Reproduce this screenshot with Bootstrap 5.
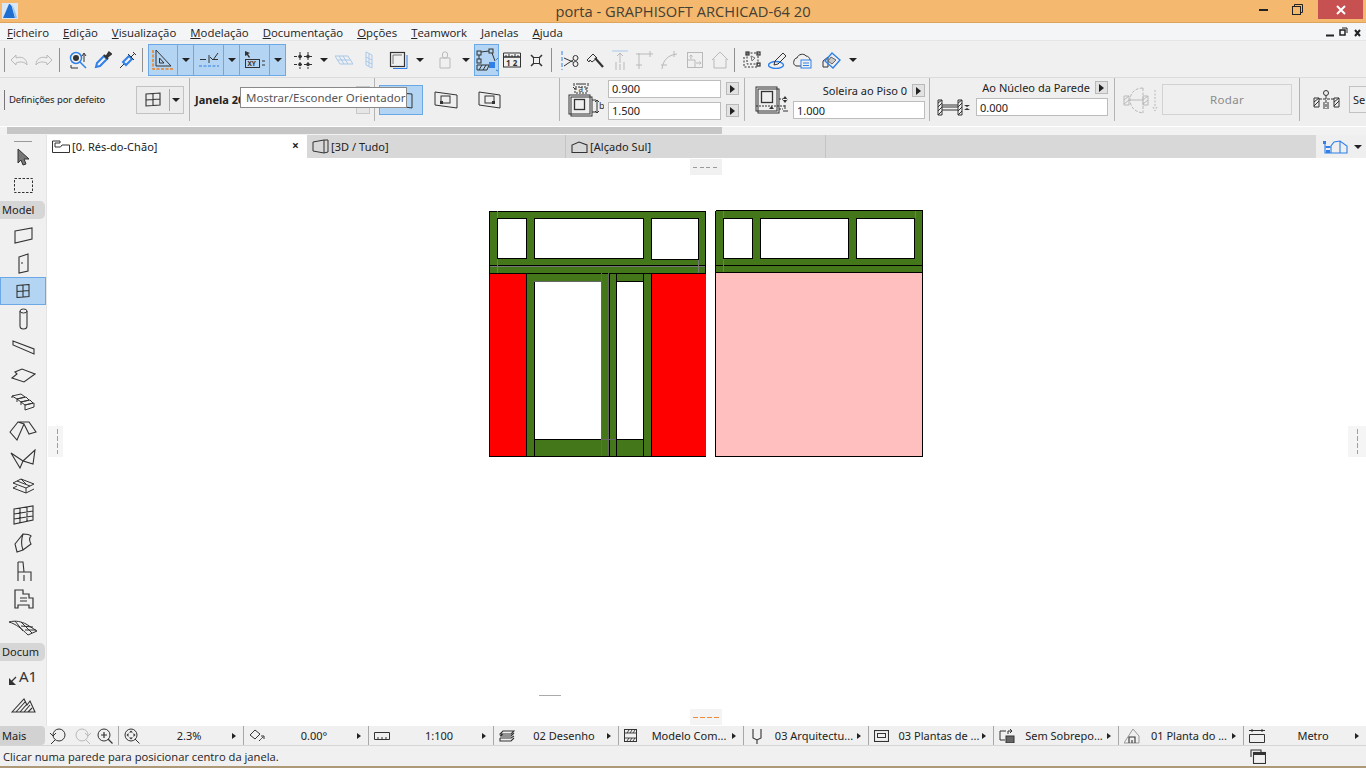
<!DOCTYPE html>
<html lang="pt">
<head>
<meta charset="UTF-8">
<title>porta - GRAPHISOFT ARCHICAD-64 20</title>
<link href="https://cdn.jsdelivr.net/npm/bootstrap@5.3.0/dist/css/bootstrap.min.css" rel="stylesheet">
<style>
html,body{margin:0;height:768px;width:1366px;overflow:hidden;background:#f0f0f0;}
body{font-family:"Noto Sans","Open Sans",sans-serif;font-size:11px;color:#222;line-height:1;}
svg{display:block;flex:none;}
svg.ico{fill:none;stroke:#333;stroke-width:1;}
svg .blu{stroke:#2f80e8;}
svg .pale{stroke:#a9c8ea;}
svg .org{stroke:#f08020;}
svg .fk{fill:#333;stroke:none;}
svg .fb{fill:#2f80e8;stroke:none;}
svg .tx{fill:#333;stroke:none;font-family:"Noto Sans",sans-serif;}
svg.dim{stroke:#b9b9b9;}
svg.dim .fk{fill:#b9b9b9;}

.titlebar{height:23px;background:#f4b96e;border-bottom:1px solid #dda45e;position:relative;}
.app-title{font-family:"Open Sans",sans-serif;font-size:14.7px;color:#454035;width:100%;text-align:center;line-height:22px;}
.app-logo{position:absolute;left:2px;top:3px;}
.winbtns{position:absolute;right:3px;top:0;}
.win-close{width:45px;height:19px;background:#c75050;}
.win-slot{width:26px;height:19px;}

.menubar{height:18px;background:#f4f5f7;font-family:"Open Sans",sans-serif;font-size:11.4px;padding-left:7px;gap:14px;line-height:19px;border-bottom:1px solid #e6e6e6;position:relative;}
.menubar u{text-underline-offset:1px;}
.docbtns{position:absolute;right:4px;top:4px;}

.toolrow{height:37px;background:#f0f0f0;border-bottom:1px solid #dcdcdc;padding-top:2px;}
.slot{height:100%;display:flex;align-items:center;justify-content:center;}
.w15{width:16px}.w17{width:17px}.w18{width:18px}.w24{width:24px}.w25{width:25px}.w30{width:30px}
.tsep{width:1px;height:24px;background:#8f8f8f;flex:none;}
.ml1{margin-left:1px}.ml2{margin-left:2px}.ml3{margin-left:3px}.ml5{margin-left:5px}.ml7{margin-left:7px}.ml8{margin-left:8px}.ml10{margin-left:10px}.ml11{margin-left:11px}.ml13{margin-left:13px}.ml20{margin-left:20px}
.mln3{margin-left:-3px}
.blue-on{height:32px;background:#b3d4f2;border:1px solid #6ba8e6;display:flex;align-items:center;justify-content:center;flex:none;}
.blue-on + .blue-on{border-left:0;}
.caret-d{width:0;height:0;border-left:4px solid transparent;border-right:4px solid transparent;border-top:4px solid #222;flex:none;}

.inforow{height:48px;background:#efefef;}
.infocell{width:185px;height:43px;border-left:1px solid #b4b4b4;flex:none;display:flex;align-items:center;}
.infocell-first{width:189px;flex:none;height:43px;display:flex;align-items:center;position:relative;}
.infocell-last{width:67px;overflow:hidden;}
.infosep{width:1px;height:20px;background:#777;margin-left:4px;}
.deftxt{font-size:9.5px;margin-left:4px;letter-spacing:-.1px;}
.favbtn{width:48px;height:28px;margin-left:auto;margin-right:5px;border:1px solid #c2c2c2;background:#ececec;display:flex;align-items:center;}
.favbtn i{width:1px;height:22px;background:#aaa;}
.janela{font-weight:700;font-size:11px;margin-left:5px;}
.tinybtn{width:14px;height:28px;margin-left:auto;margin-right:4px;border:1px solid #c8c8c8;background:#e6e6e6;}
.viewbtn{width:44px;height:30px;background:#b3d4f2;border:1px solid #6ba8e6;margin-left:4px;display:flex;align-items:center;justify-content:center;}
.infield{display:block;width:113px;height:18px;border:1px solid #bdbdbd;background:#fff;border-radius:0;font:11px "Noto Sans",sans-serif;color:#222;padding:0 3px;outline:0;}
.field132{width:132px}
.arrbtn{width:13px;height:13px;border:1px solid #b9b9b9;background:#e2e2e2;display:flex;align-items:center;justify-content:center;flex:none;}
.arr-r{width:0;height:0;border-top:4px solid transparent;border-bottom:4px solid transparent;border-left:5px solid #222;flex:none;}
.arr-s{border-top-width:3.5px;border-bottom-width:3.5px;border-left-width:4px;}
.lbl-small{font-size:11px;white-space:nowrap;}
.rodar{width:130px;height:31px;border:1px solid #d2d2d2;color:#8c8c8c;font-size:11.5px;display:flex;align-items:center;justify-content:center;margin-left:3px;letter-spacing:.3px;}
.sebtn{width:18px;height:27px;border:1px solid #c2c2c2;border-right:0;background:#efefef;margin-left:9px;padding-left:3px;font-size:11px;line-height:25px;}
.up1{margin-top:-2px}

.scrollrow{height:9px;background:#f2f2f2;border-top:1px solid #fff;padding-left:7px;}
.scrollthumb{width:715px;height:7px;background:#c6c6c6;}

.mainrow{height:591px;}
.toolbox{width:47px;flex:none;background:#f0f0f0;border-right:1px solid #e4e4e4;padding-top:6px;position:relative;}
.toolbox-grip{height:1px;width:18px;background:#9a9a9a;margin-left:14px;margin-bottom:1px;}
.tbi{height:28px;display:flex;align-items:center;justify-content:center;}
.tbi-on{background:#b3d4f2;border:1px solid #6ba8e6;}
.groupname{height:18px;background:#d6d6d6;border-radius:0 5px 5px 0;font-size:11px;line-height:18px;padding-left:2px;margin:2px 1px 2px 0;white-space:nowrap;}

.tabstrip{height:23px;background:#d8d8d8;}
.tabitem{height:23px;width:259px;flex:none;display:flex;align-items:center;padding-left:5px;gap:2px;border-right:1px solid #c4c4c4;font-size:11px;letter-spacing:.05px;}
.tab-act{background:#fff;border-right:0;width:260px;position:relative;}
.tab-w260{width:260px;}
.tab-x{position:absolute;right:8px;top:5px;font-weight:700;font-size:12px;}
.tab-end{width:50px;margin-left:auto;background:#efefef;display:flex;align-items:center;padding-left:6px;gap:5px;}
.cnv{width:1319px;height:568px;background:#fff;}

.statrow{height:20px;background:#f0f0f0;border-bottom:1px solid #d6d6d6;}
.stat-more{width:45px;height:19px;background:#d2d2d2;padding-left:2px;line-height:19px;font-size:11px;flex:none;border-radius:0 4px 4px 0;}
.stat-nav{width:73px;flex:none;padding-left:5px;gap:9px;}
.statcell{width:125px;flex:none;height:19px;border-left:1px solid #a8a8a8;padding-left:5px;padding-right:7px;display:flex;align-items:center;}
.statcell:last-child{width:123px;}
.stat-lbl{flex:1;text-align:center;white-space:nowrap;line-height:19px;padding-left:6px;}
.mr1{margin-right:1px}.mr3{margin-right:3px}
.promptrow{height:20px;background:#f0f0f0;padding-left:3px;font-family:"Open Sans",sans-serif;font-size:11.2px;line-height:22px;position:relative;}
.prompt-ico{position:absolute;left:1250px;top:3px;}
.taskstrip{height:3px;background:#ad9878;}

.hint{position:absolute;left:240px;top:87px;width:167px;height:21px;background:#fff;border:1px solid #8a8a8a;font-size:11.5px;line-height:19px;padding-left:5px;color:#555;white-space:nowrap;z-index:5;}
</style>
</head>
<body>

<!-- titulo -->
<div class="titlebar d-flex">
  <svg class="app-logo" width="16" height="16" viewBox="0 0 16 16"><rect width="16" height="16" fill="#d9e6f5"/><path d="M1 15 L7 1 C9 1 10 3 11 8 L13 15Z" fill="#1f6fd0"/><path d="M9 2 C11 2 13 8 15 15 H13 C12 9 11 4 9 2Z" fill="#8fc0f0"/></svg>
  <div class="app-title">porta - GRAPHISOFT ARCHICAD-64 20</div>
  <div class="winbtns d-flex">
    <div class="win-slot d-flex align-items-center justify-content-center"><svg width="9" height="3"><rect width="9" height="2" y="1" fill="#222"/></svg></div>
    <div class="win-slot ms-2 me-2 d-flex align-items-center justify-content-center"><svg width="11" height="11" viewBox="0 0 11 11" fill="none" stroke="#222"><rect x=".5" y="2.5" width="8" height="8"/><path d="M2.5 2.5V.5H10.5V8.5H8.5"/></svg></div>
    <div class="win-close d-flex align-items-center justify-content-center"><svg width="10" height="10" viewBox="0 0 10 10" stroke="#fff" stroke-width="2"><path d="M1 1L9 9M9 1L1 9"/></svg></div>
  </div>
</div>

<!-- menu -->
<div class="menubar d-flex">
  <span><u>F</u>icheiro</span><span><u>E</u>dição</span><span><u>V</u>isualização</span><span><u>M</u>odelação</span><span><u>D</u>ocumentação</span><span><u>O</u>pções</span><span><u>T</u>eamwork</span><span><u>J</u>anelas</span><span><u>A</u>juda</span>
  <svg class="docbtns" width="36" height="10" viewBox="0 0 36 10" fill="none" stroke="#222"><path d="M0 8.5H8" stroke-width="2"/><rect x="14" y="3" width="5" height="5" stroke-width="1.5"/><path d="M16 1H21V6"/><path d="M29 3L34 9M34 3L29 9" stroke-width="2"/></svg>
</div>

<!-- barra de ferramentas -->
<div class="toolrow d-flex align-items-center">
  <div class="tsep ms-1"></div>
  <div class="slot w25 ml1"><svg class="ico dim" width="18" height="14" viewBox="0 0 18 14"><path d="M1 7 L6 2 V5 C11 3 17 5 17 12 C15 9 11 8 6 10 V12Z"/></svg></div>
  <div class="slot w25"><svg class="ico dim" width="18" height="14" viewBox="0 0 18 14"><path d="M17 7 L12 2 V5 C7 3 1 5 1 12 C3 9 7 8 12 10 V12Z"/></svg></div>
  <div class="tsep ml3"></div>
  <div class="slot w25 ml5"><svg class="ico" width="18" height="18" viewBox="0 0 18 18"><circle class="blu" cx="7" cy="7" r="5.5" stroke-width="1.5"/><circle class="fk" cx="7" cy="7" r="3"/><path class="blu" d="M11 11L17 17" stroke-width="1.5"/><path d="M15 11V3M13 5L15 2L17 5M2 14V17H9"/></svg></div>
  <div class="slot w25"><svg class="ico" width="18" height="18" viewBox="0 0 18 18"><path class="blu" d="M2 16L3 12L10 5L13 8L6 15Z" stroke-width="2"/><path d="M10 4L14 8M12 6L15 1.5L17 3L12.5 6.5" stroke-width="2"/></svg></div>
  <div class="slot w25"><svg class="ico" width="18" height="18" viewBox="0 0 18 18"><path class="blu" d="M4 11L10 5L13 8L7 14Z" stroke-width="2"/><path d="M1 17L5 13M9 3L15 9M12 6L16 2M14 1L17 4"/></svg></div>
  <div class="tsep ml2"></div>

  <div class="blue-on w30 ml5"><svg class="ico" width="22" height="24" viewBox="0 0 22 24"><path d="M4 2L19 18H4Z M7.500 10L12 15H7.500Z"/><path class="org" d="M1 2V21H21" stroke-dasharray="3 1.500" stroke-width="1.500"/></svg></div>
  <div class="blue-on w15"><div class="caret-d"></div></div>
  <div class="blue-on w30"><svg class="ico" width="22" height="20" viewBox="0 0 22 20"><path d="M2 9.500H8M14 9.500H20M11 5V13M12 7L15 10L20 3"/><path class="blu" d="M1 16H21" stroke-dasharray="3 1.500"/></svg></div>
  <div class="blue-on w15"><div class="caret-d"></div></div>
  <div class="blue-on w30"><svg class="ico" width="22" height="20" viewBox="0 0 22 20"><path class="fk" d="M1 1L6 3L4 4L6 7L5 8L3 5L1 6Z"/><rect x="1.500" y="9.500" width="14" height="8"/><path d="M18 11H21M18 15H21"/><text class="tx" x="3.500" y="16" font-size="6.500" font-weight="700">XY</text></svg></div>
  <div class="blue-on w15"><div class="caret-d"></div></div>

  <div class="slot w25 ml5"><svg class="ico" width="20" height="17" viewBox="0 0 20 17"><path d="M6 0V17M14 0V17M0 4.500H20M0 12.500H20" stroke-dasharray="3 2"/><circle class="fk" cx="6" cy="4.500" r="1.800"/><circle class="fk" cx="14" cy="4.500" r="1.800"/><circle class="fk" cx="6" cy="12.500" r="1.800"/><circle class="fk" cx="14" cy="12.500" r="1.800"/></svg></div>
  <div class="slot w15"><div class="caret-d"></div></div>
  <div class="slot w24"><svg class="ico" width="18" height="10" viewBox="0 0 18 10"><path class="pale" d="M0 1H13L18 9H5Z M4 1L9 9M8 1L13 9M2 5H15"/></svg></div>
  <div class="slot w25"><svg class="ico" width="8" height="18" viewBox="0 0 8 18"><path class="pale" d="M1 1L7 4V17L1 14Z M4 3V15M1 6L7 9M1 10L7 13"/></svg></div>
  <div class="slot w25 ml5"><svg class="ico" width="19" height="18" viewBox="0 0 19 18"><rect x="1.500" y="1.500" width="14" height="14" stroke-width="1.200"/><path class="blu" d="M4 17.500H18V4"/><path d="M4 13V4H13" stroke="#777"/></svg></div>
  <div class="slot w18"><div class="caret-d"></div></div>
  <div class="slot w25 ml3"><svg class="ico dim" width="12" height="18" viewBox="0 0 12 18"><rect x="3.500" y="1" width="5" height="6" rx="2"/><path d="M1 7H11V17H1Z"/></svg></div>
  <div class="slot w17"><div class="caret-d"></div></div>
  <div class="blue-on w25"><svg class="ico" width="22" height="24" viewBox="0 0 22 24"><path d="M5 4L13 3M3 7L3 11M16 5L19 13"/><rect x="1" y="3" width="4" height="4"/><rect x="13" y="1" width="4" height="4"/><rect x="1" y="11" width="4" height="4"/><path d="M1 17H13L11 22H1Z M3 22L6 17M7 22L10 17"/><rect class="fb" x="13" y="14" width="6" height="6"/><path class="blu" d="M20 12L22 10M20 22L22 23"/></svg></div>
  <div class="slot w25"><svg class="ico" width="18" height="16" viewBox="0 0 18 16"><path d="M.5 1H17.500V5H.5Z M3 5V3M6 5V2M9 5V3M12 5V2M15 5V3"/><rect x=".5" y="5" width="17" height="10"/><text class="tx" x="3" y="13.500" font-size="8" font-weight="700">1 2</text></svg></div>
  <div class="slot w25"><svg class="ico" width="13" height="13" viewBox="0 0 13 13"><path d="M1 1L4 4M12 1L9 4M1 12L4 9M12 12L9 9" stroke-width="1.500"/><rect x="3.500" y="3.500" width="6" height="6"/></svg></div>
  <div class="tsep ml2"></div>
  <div class="slot w25 ml5"><svg class="ico" width="18" height="19" viewBox="0 0 18 19"><path class="blu" d="M1 0V19" stroke-dasharray="4 2"/><path d="M3 7L12 11M3 15L12 9"/><circle cx="14.500" cy="7" r="2.500"/><circle cx="14.500" cy="13" r="2.500"/></svg></div>
  <div class="slot w25"><svg class="ico" width="18" height="16" viewBox="0 0 18 16"><path d="M1 8L7 2L11 6L6 10L4 8L3 10Z"/><path d="M9 6L17 15" stroke-width="2.200"/></svg></div>
  <div class="slot w25"><svg class="ico dim" width="18" height="20" viewBox="0 0 18 20"><path class="pale" d="M1 1H17"/><path d="M9 3V13M6 6L9 3L12 6M5 12V20M9 14V20M13 12V20"/></svg></div>
  <div class="slot w25"><svg class="ico dim" width="18" height="18" viewBox="0 0 18 18"><path d="M0 3H17M14 0V6M3 2V18M0 14H6"/></svg></div>
  <div class="slot w25"><svg class="ico dim" width="18" height="18" viewBox="0 0 18 18"><path d="M1 18C2 9 7 4 16 3M13 0V6M0 14H6"/></svg></div>
  <div class="slot w25"><svg class="ico dim" width="16" height="16" viewBox="0 0 16 16"><rect x=".5" y=".5" width="15" height="15"/><path d="M.5 8H8V15.500M4 7V3M2.500 4.500L4 3L5.500 4.500M9 11H14M12.500 9.500L14 11L12.500 12.500"/></svg></div>
  <div class="slot w25"><svg class="ico dim" width="18" height="18" viewBox="0 0 18 18" stroke-width="1.500"><path d="M1 9L9 1L17 9M3 8V17H15V8"/></svg></div>
  <div class="tsep ml2"></div>
  <div class="slot w25 ml5"><svg class="ico" width="19" height="18" viewBox="0 0 19 18"><path d="M1 6V16H15M4 2H15V13H4Z" stroke-dasharray="2 1.500"/><rect x="3" y="1" width="3" height="3" stroke-width="1.200"/><rect x="14" y="1" width="3" height="3" stroke-width="1.200"/><rect x="14" y="12" width="3" height="3" stroke-width="1.200"/><path d="M8 5L12 7L9 10Z" stroke="#777"/></svg></div>
  <div class="slot w25"><svg class="ico" width="19" height="17" viewBox="0 0 19 17"><ellipse class="blu" cx="8" cy="13" rx="7.500" ry="3.500" stroke-width="1.400"/><path d="M6 13L7 9L15 1L18 4L10 12Z"/></svg></div>
  <div class="slot w25"><svg class="ico" width="19" height="17" viewBox="0 0 19 17"><path d="M8 14H4C1 14 0 11 1 9C1 7 3 6 4 6C5 2 11 1 13 4C15 4 17 6 17 8"/><rect class="blu" x="8" y="8" width="10" height="8"/><path class="blu" d="M10 11H16M10 13.500H16"/></svg></div>
  <div class="slot w25 ms-1"><svg class="ico" width="19" height="17" viewBox="0 0 19 17"><path d="M1 15V9L6 5V15Z"/><path class="blu" d="M10 1L18 8L11 16L3 9Z" stroke-width="1.400"/><path d="M9 5L14 8L10 12L6 9Z" fill="#c9c9c9" stroke="#666"/></svg></div>
  <div class="slot w18"><div class="caret-d"></div></div>
</div>

<!-- caixa de informacao -->
<div class="inforow d-flex">
  <div class="infocell-first">
    <div class="infosep"></div>
    <span class="deftxt">Definições por defeito</span>
    <div class="favbtn">
      <svg class="ico ms-2 ml3" width="16" height="15" viewBox="0 0 16 15"><path d="M1 2L15 1V13L1 14Z M8 2V14M1 8L15 7" stroke-width="1.100"/></svg>
      <i class="ms-2"></i><div class="caret-d ml2"></div>
    </div>
  </div>
  <div class="infocell"><span class="janela">Janela 20</span><div class="tinybtn"></div></div>
  <div class="infocell">
    <div class="viewbtn"><svg class="ico" width="24" height="18" viewBox="0 0 24 18"><path d="M1 1L23 3V17L1 14Z"/><rect x="7" y="5" width="9" height="7"/></svg></div>
    <svg class="ico ml11" width="24" height="18" viewBox="0 0 24 18"><path d="M1 1L23 4V17L1 14Z"/><rect x="7" y="5" width="9" height="7"/><rect class="fk" x="6" y="10" width="3" height="3"/></svg>
    <svg class="ico ml20" width="23" height="18" viewBox="0 0 23 18"><path d="M1 1L22 4V17L1 14Z"/><rect x="7" y="5" width="9" height="7"/><rect class="fk" x="14" y="10" width="3" height="3"/></svg>
  </div>
  <div class="infocell">
    <svg class="ico ml8" width="36" height="37" viewBox="0 0 36 37"><path d="M8 3H18M6 2V5M20 2V5M7 8L5 6M7 8H9M17 8H19"/><path d="M7 6H19V12H7Z" stroke-dasharray="2 1"/><text class="tx" x="10.500" y="11" font-size="8">a</text><rect x="3" y="16" width="21" height="19"/><rect x="1" y="14" width="21" height="19"/><rect x="6.500" y="18.500" width="10" height="10" stroke-width="1.300"/><path d="M24 19H28M24 31H28M29 19V32M27 21L29 19L31 21M27 30L29 32L31 30"/><text class="tx" x="31" y="28" font-size="9">b</text></svg>
    <div class="ms-1">
      <div class="d-flex align-items-center"><input class="infield" value="0.900" readonly><div class="arrbtn ml5"><div class="arr-r"></div></div></div>
      <div class="d-flex align-items-center mt-1"><input class="infield" value="1.500" readonly><div class="arrbtn ml5"><div class="arr-r"></div></div></div>
    </div>
  </div>
  <div class="infocell">
    <svg class="ico ml10" width="36" height="30" viewBox="0 0 36 30"><rect x="3" y="4" width="21" height="24"/><rect x="1" y="2" width="21" height="24"/><rect x="6.500" y="6.500" width="11" height="11" stroke-width="1.300"/><path d="M1 21H30M24 14H28M24 24H28" stroke-dasharray="2 1"/><path class="fk" d="M14 24L19 24L16.500 21Z M30 11L33 15H27Z M30 18L33 14H27Z"/><path d="M30 24V20M28 26H33"/></svg>
    <div class="ml2 mt-1">
      <div class="d-flex align-items-center justify-content-end"><span class="lbl-small">Soleira ao Piso 0</span><div class="arrbtn ml5"><div class="arr-r"></div></div></div>
      <input class="infield field132 mt-1" value="1.000" readonly>
    </div>
  </div>
  <div class="infocell">
    <svg class="ico mt-3 ml7" width="34" height="17" viewBox="0 0 34 17"><path d="M1 1H5V16H1Z M21 1H25V16H21Z M1 4L5 1M1 8L5 4M1 12L5 8M1 16L5 12M21 4L25 1M21 8L25 4M21 12L25 8M21 16L25 12M5 6H21M5 8H21M5 11H21"/><path class="fk" d="M30 2V6H33L30 8L27 6H30Z M30 15V11H33L30 9L27 11H30Z"/></svg>
    <div class="ml5 up1">
      <div class="d-flex align-items-center justify-content-end"><span class="lbl-small">Ao Núcleo da Parede</span><div class="arrbtn ml5"><div class="arr-r"></div></div></div>
      <input class="infield field132 mt-1" value="0.000" readonly>
    </div>
  </div>
  <div class="infocell">
    <svg class="ico dim ml8" width="36" height="28" viewBox="0 0 36 28"><path d="M1 10H6V19H1Z M20 10H25V19H20Z M1 14L6 10M1 18L6 14M20 14L25 10M20 18L25 14M6 14H20"/><path d="M20 2C11 2 7 8 7 14C7 20 11 26 20 27M20 2V27" stroke-dasharray="3 1.500"/><path d="M32 4V22M30 21L32 25L34 21" stroke-dasharray="2 1.500"/></svg>
    <div class="rodar">Rodar</div>
  </div>
  <div class="infocell infocell-last">
    <svg class="ico ml13" width="27" height="19" viewBox="0 0 27 19"><circle cx="13" cy="3" r="2.500"/><path d="M1 8H6V17H1Z M21 8H26V17H21Z M1 12L6 8M1 16L6 11M21 12L26 8M21 16L26 11"/><path d="M6 9H21M13 6V19" stroke-dasharray="3 1"/><path d="M11 12V19M15 12V19"/></svg>
    <div class="sebtn">Se</div>
  </div>
</div>

<div class="scrollrow"><div class="scrollthumb"></div></div>

<!-- area principal -->
<div class="mainrow d-flex">
  <div class="toolbox">
    <div class="toolbox-grip"></div>
    <div class="tbi"><svg class="ico" width="15" height="18" viewBox="0 0 15 18"><path d="M2 1L13 11H8L10 16L7 17L5 12L2 15Z" fill="#777"/></svg></div>
    <div class="tbi"><svg class="ico" width="19" height="15" viewBox="0 0 19 15"><rect x=".5" y=".5" width="18" height="14" stroke-dasharray="2.500 1.500"/></svg></div>
    <div class="groupname">Model</div>
    <div class="tbi"><svg class="ico" width="19" height="17" viewBox="0 0 19 17"><path d="M1 4L18 1V12L1 16Z" stroke-width="1.100"/></svg></div>
    <div class="tbi"><svg class="ico" width="11" height="21" viewBox="0 0 11 21"><path d="M1 4L10 1V18L1 20Z" stroke-width="1.100"/><path d="M3 10H5"/></svg></div>
    <div class="tbi tbi-on"><svg class="ico" width="14" height="14" viewBox="0 0 14 14"><path d="M1 1.500L13 .5V12.500L1 13.500Z M7 1V13M1 7.500L13 6.500" stroke-width="1.100"/></svg></div>
    <div class="tbi"><svg class="ico" width="9" height="22" viewBox="0 0 9 22"><path d="M1 3V18C1 22 8 22 8 18V3" stroke-width="1.100"/><ellipse cx="4.500" cy="3" rx="3.500" ry="2"/></svg></div>
    <div class="tbi"><svg class="ico" width="23" height="15" viewBox="0 0 23 15"><path d="M1 1L22 9V14L1 5Z M1 1V5M22 9V14" stroke-width="1.100"/></svg></div>
    <div class="tbi"><svg class="ico" width="25" height="15" viewBox="0 0 25 15"><path d="M1 10L6 6L4 4L11 1L24 6L13 14Z" stroke-width="1.100"/></svg></div>
    <div class="tbi"><svg class="ico" width="25" height="20" viewBox="0 0 25 20"><path d="M1 3L10 1L14 4L6 6Z M6 6L15 4L18 7L10 9Z M10 9L19 7L22 10L14 12Z M14 12L23 10V14L14 17Z M1 3V5M6 6V9M10 9V12"/></svg></div>
    <div class="tbi"><svg class="ico" width="28" height="20" viewBox="0 0 28 20"><path d="M1 11L9 1H20L27 11L20 13L15 3L8 19Z M9 1L15 3" stroke-width="1.100"/></svg></div>
    <div class="tbi"><svg class="ico" width="26" height="20" viewBox="0 0 26 20"><path d="M1 4L13 12L25 1L23 15L13 12L10 19Z" stroke-width="1.100"/></svg></div>
    <div class="tbi"><svg class="ico" width="23" height="18" viewBox="0 0 23 18"><path d="M1 5L9 1L22 6L14 10Z M1 10L14 15L22 11M5 8L1 10M14 10V15M9 1L14 6M5 3L18 8"/></svg></div>
    <div class="tbi"><svg class="ico" width="21" height="20" viewBox="0 0 21 20"><path d="M1 4L20 1V15L1 19Z M7 3V18M14 2V16M1 9L20 6M1 14L20 11" stroke-width="1.100"/></svg></div>
    <div class="tbi"><svg class="ico" width="18" height="20" viewBox="0 0 18 20"><path d="M1 11L9 1C13 1 15 1 17 3C14 6 16 9 17 11L9 17L3 19ZM9 1C7 7 7 12 9 17" stroke-width="1.100"/></svg></div>
    <div class="tbi"><svg class="ico" width="17" height="21" viewBox="0 0 17 21"><path d="M3 1H8L9 11H16V20M3 1V20M3 11H9M9 14V20" stroke-width="1.100"/></svg></div>
    <div class="tbi"><svg class="ico" width="21" height="20" viewBox="0 0 21 20"><path d="M2 1H10V5H16V9H20V19H16V16H5V19H2Z M7 9H14M7 12H14" stroke-width="1.200"/></svg></div>
    <div class="tbi"><svg class="ico" width="30" height="17" viewBox="0 0 30 17"><path d="M1 3C8 1 14 3 18 5L29 12L20 16C14 10 8 5 1 3Z M7 2L15 12M13 3L24 14M13 7L25 8M17 11L28 11"/></svg></div>
    <div class="groupname">Docum</div>
    <div class="tbi"><svg class="ico" width="32" height="24" viewBox="0 0 32 24"><path d="M3 18L9 12" stroke-width="1.200"/><path class="fk" d="M2 20V13L9 20Z"/><text class="tx" x="12" y="17" font-size="15">A1</text></svg></div>
    <div class="tbi"><svg class="ico" width="25" height="15" viewBox="0 0 25 15"><path d="M1 14L13 1L16 7L19 3L24 14Z M5 14L14 4M9 14L16 6M13 14L19 7M17 14L21 10" stroke-width="1.100"/></svg></div>
  </div>

  <div class="flex-grow-1">
    <div class="tabstrip d-flex">
      <div class="tabitem tab-act"><svg class="ico" width="18" height="13" viewBox="0 0 18 13"><path d="M.5 1H8V3H3V7H8.500L10 5H17.500V12.500H.5Z"/></svg><span>[0. Rés-do-Chão]</span><span class="tab-x">×</span></div>
      <div class="tabitem"><svg class="ico" width="17" height="15" viewBox="0 0 17 15"><path d="M1 3L12 1V14L1 12Z M12 1L16 1V13L12 14"/></svg><span>[3D / Tudo]</span></div>
      <div class="tabitem tab-w260"><svg class="ico" width="17" height="12" viewBox="0 0 17 12"><path d="M1 11.500H16V4L8 1L1 4Z" stroke-width="1.100"/></svg><span>[Alçado Sul]</span></div>
      <div class="tab-end"><svg class="ico" width="27" height="14" viewBox="0 0 27 14"><path class="blu" d="M3 2V13H9M3 7H9M9 6V13H25V6L18 1L12 2Z M18 1V13" stroke-width="1.100"/><rect class="fb" x="1" y="1" width="3" height="3"/><rect class="fb" x="4" y="6" width="4" height="2"/><rect class="fb" x="4" y="10" width="4" height="3"/></svg><div class="caret-d"></div></div>
    </div>
    <svg class="cnv" width="1319" height="568" viewBox="47 158 1319 568" shape-rendering="crispEdges">
      <rect x="690" y="159" width="32" height="16" fill="#f1f1f1"/><path d="M693 167.500H719" stroke="#999" stroke-dasharray="4 2.500"/>
      <rect x="690" y="709" width="32" height="16" fill="#f4f4f4"/><path d="M693 717.500H719" stroke="#ee8a3a" stroke-dasharray="5 2"/>
      <rect x="48" y="426" width="15" height="31" fill="#f5f5f5"/><path d="M57.500 429V454" stroke="#ee8a3a" stroke-dasharray="5 2"/>
      <rect x="1348" y="426" width="18" height="31" fill="#f5f5f5"/><path d="M1357.500 429V454" stroke="#ee8a3a" stroke-dasharray="5 2"/>
      <path d="M539 695.500H561" stroke="#aaa"/>

      <!-- alcado esquerdo -->
      <rect x="490" y="211" width="216" height="62" fill="#43771a"/>
      <g fill="#fff" stroke="#000"><rect x="497.500" y="218.500" width="29" height="40"/><rect x="534.500" y="218.500" width="109" height="40"/><rect x="651.500" y="218.500" width="47" height="41"/></g>
      <path d="M490 265.500H706M490 211.500H706" stroke="#000"/>
      <path d="M490 266.500H706M497.500 211V218M497.500 259V273M698.500 260V273" stroke="#777"/>
      <rect x="490" y="273" width="216" height="183" fill="#43771a"/>
      <g fill="#f00"><rect x="490" y="273" width="36" height="183"/><rect x="651" y="273" width="55" height="183"/></g>
      <g fill="#fff"><rect x="534" y="281" width="67" height="158"/><rect x="616" y="281" width="27" height="158"/></g>
      <path d="M490 273.500H706M489.500 211V457M490 456.500H706M526.500 273V456M534.500 281V456M643.500 273V456M651.500 273V456M616.500 273V456M609.500 273V456M534 439.500H601M617 439.500H643M643 281.500H616M705.500 211V273" stroke="#000"/>
      <path d="M534 281.500H601M601.500 273V456M608.500 273V456M601 439.500H616" stroke="#666"/>

      <!-- alcado direito -->
      <rect x="716" y="211" width="207" height="62" fill="#43771a"/>
      <g fill="#fff" stroke="#000"><rect x="723.500" y="218.500" width="29" height="40"/><rect x="760.500" y="218.500" width="88" height="40"/><rect x="856.500" y="218.500" width="58" height="40"/></g>
      <path d="M715.500 211V457M922.500 211V457M716 210.500H923M716 265.500H923M716 272.500H923M716 456.500H923" stroke="#000"/>
      <path d="M723.500 211V218M723.500 259V272M915.500 211V218" stroke="#777"/>
      <rect x="716" y="273" width="206" height="183" fill="#ffbfbf"/>
    </svg>
  </div>
</div>

<!-- barra de estado -->
<div class="statrow d-flex">
  <div class="stat-more">Mais</div>
  <div class="stat-nav d-flex align-items-center">
    <svg class="ico" width="16" height="16" viewBox="0 0 16 16"><circle cx="9" cy="7" r="6"/><path d="M5 12L1 16M0 5L3 8L6 5"/></svg>
    <svg class="ico dim" width="16" height="16" viewBox="0 0 16 16"><circle cx="7" cy="7" r="6"/><path d="M11 12L15 16M16 5L13 8L10 5"/></svg>
    <svg class="ico mln3" width="16" height="16" viewBox="0 0 16 16"><circle cx="7" cy="7" r="6"/><path d="M11 11L15.500 15.500M4 7H10M7 4V10" stroke-width="1.200"/></svg>
  </div>
  <div class="statcell"><svg class="ico" width="16" height="16" viewBox="0 0 16 16"><circle cx="7" cy="7" r="6"/><path d="M11 11L15.500 15.500"/><path class="fk" d="M7 2.500L9 4.500H5Z M7 11.500L9 9.500H5Z M2.500 7L4.500 5V9Z M11.500 7L9.500 5V9Z"/></svg><span class="stat-lbl">2.3%</span><div class="arr-r arr-s"></div></div>
  <div class="statcell"><svg class="ico" width="16" height="14" viewBox="0 0 16 14"><path d="M1 6L6 1L11 5L6 10Z M10 12C12 10 13 9 14 8M12 7H15V10"/></svg><span class="stat-lbl">0.00°</span><div class="arr-r arr-s"></div></div>
  <div class="statcell"><svg class="ico" width="16" height="8" viewBox="0 0 16 8"><path d="M.5 .5H15.500V7.500H.5Z M4 7.500V5M8 7.500V5M12 7.500V5"/></svg><span class="stat-lbl">1:100</span><div class="arr-r arr-s"></div></div>
  <div class="statcell"><svg class="ico" width="16" height="14" viewBox="0 0 16 14"><path d="M4 2H15L12 5H1Z M1 7H12L15 4M1 7L4 5M1 9H12L15 7M1 9V12H12L15 9" stroke-width="1.100"/></svg><span class="stat-lbl">02 Desenho</span><div class="arr-r arr-s"></div></div>
  <div class="statcell"><svg class="ico mr3" width="13" height="13" viewBox="0 0 13 13"><rect x=".5" y=".5" width="12" height="12"/><path d="M1 4H12M1 9H12M3 4L5 1M6 4L8 1M9 4L11 1M3 12L5 9M6 12L8 9M9 12L11 9" stroke-width=".9"/></svg><span class="stat-lbl">Modelo Com...</span><div class="arr-r arr-s"></div></div>
  <div class="statcell"><svg class="ico" width="16" height="16" viewBox="0 0 16 16"><path d="M4 1V10L8 12L12 10V1M8 12V16" stroke-width="1.100"/></svg><span class="stat-lbl">03 Arquitectu...</span><div class="arr-r arr-s"></div></div>
  <div class="statcell"><svg class="ico mr1" width="15" height="12" viewBox="0 0 15 12"><rect x=".5" y=".5" width="14" height="11" stroke-width="1.100"/><rect x="3.500" y="3.500" width="8" height="4"/></svg><span class="stat-lbl">03 Plantas de ...</span><div class="arr-r arr-s"></div></div>
  <div class="statcell"><svg class="ico" width="16" height="14" viewBox="0 0 16 14"><path d="M1 2H7M1 2V11H6"/><rect x="7" y="7" width="8" height="7" fill="#666"/><path d="M9 5V2H13M11 0L13 2L11 4"/></svg><span class="stat-lbl">Sem Sobrepo...</span><div class="arr-r arr-s"></div></div>
  <div class="statcell"><svg class="ico" width="16" height="16" viewBox="0 0 16 16"><path d="M0 15L9 1L15 8V15Z" stroke="#999"/><path d="M5 15V9H11V15M8 15V12" stroke-width="1.100"/></svg><span class="stat-lbl">01 Planta do ...</span><div class="arr-r arr-s"></div></div>
  <div class="statcell"><svg class="ico" width="16" height="14" viewBox="0 0 16 14"><path d="M0 1.500H16M3 0V3M13 0V3M.5 5.500H15.500V13.500H.5Z"/></svg><span class="stat-lbl">Metro</span><div class="arr-r arr-s"></div></div>
</div>
<div class="promptrow">Clicar numa parede para posicionar centro da janela.
  <svg class="ico prompt-ico" width="16" height="15" viewBox="0 0 16 15"><path d="M1 8V1H11V3" stroke-width="1.100"/><rect x="3.500" y="3.500" width="12" height="11" stroke-width="1.100"/><path d="M3 5H16" stroke-width="2"/></svg>
</div>
<div class="taskstrip"></div>

<div class="hint">Mostrar/Esconder Orientador</div>

<script src="https://cdn.jsdelivr.net/npm/bootstrap@5.3.0/dist/js/bootstrap.bundle.min.js"></script>
</body>
</html>
